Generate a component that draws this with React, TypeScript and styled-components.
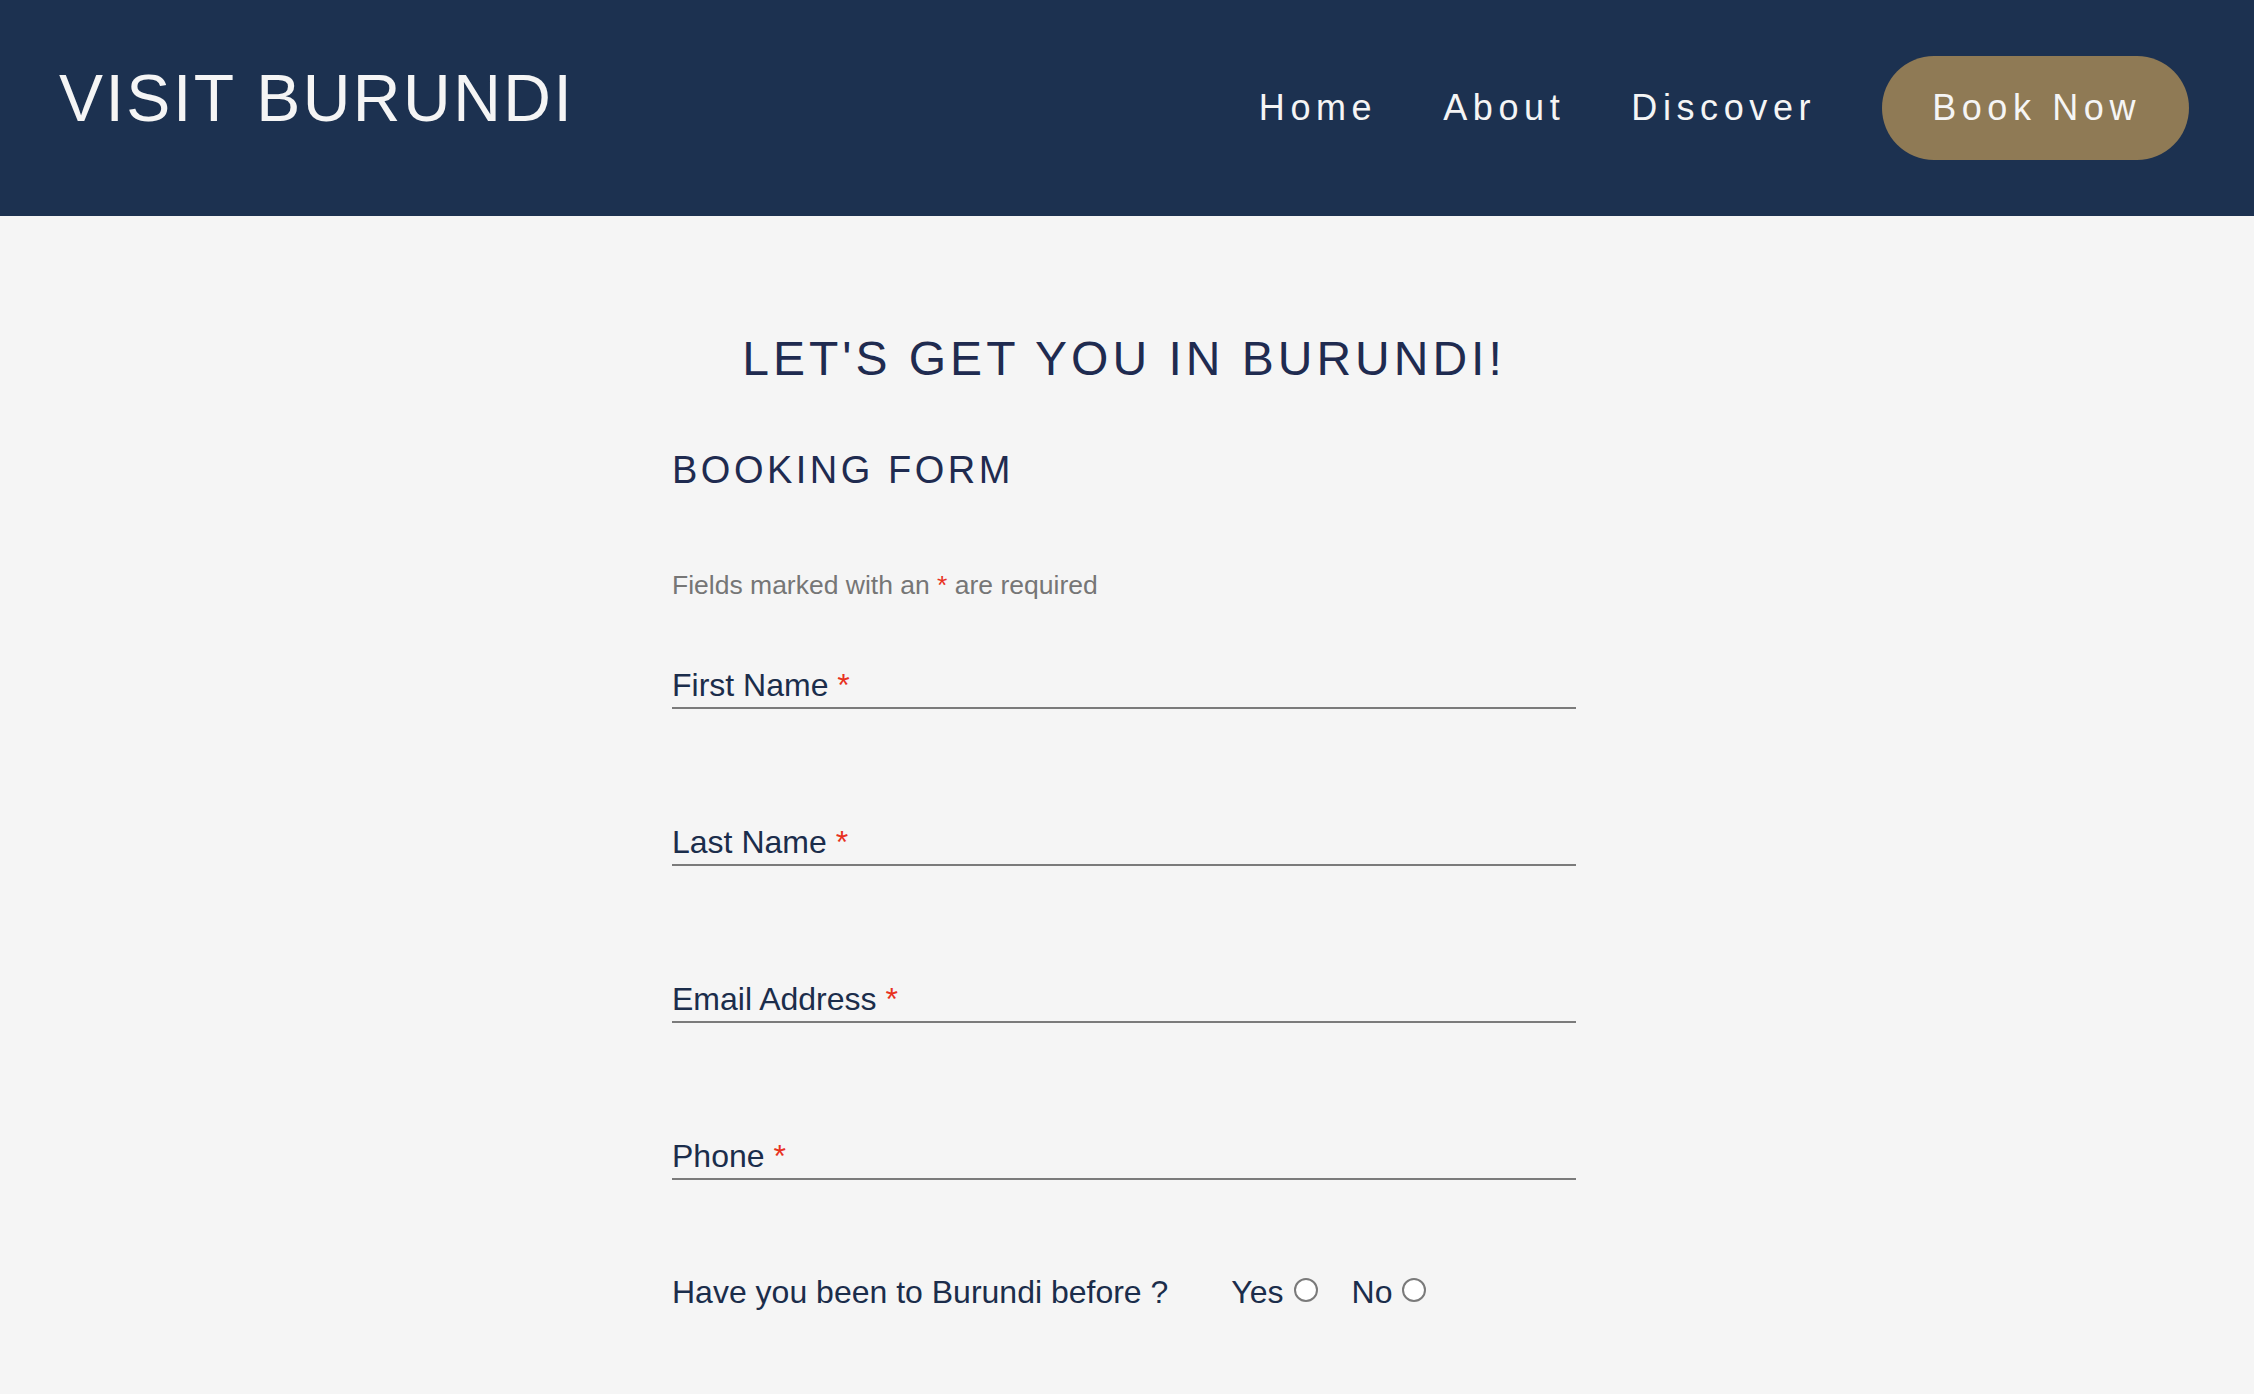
import React from "react";
import styled, { createGlobalStyle } from "styled-components";

const GlobalStyle = createGlobalStyle`
  html, body {
    margin: 0;
    padding: 0;
    background: #f5f5f5;
  }
  body {
    font-family: "Liberation Sans", Arial, sans-serif;
  }
  * { box-sizing: border-box; }
`;

const Page = styled.div`
  min-height: 1394px;
  background: #f5f5f5;
`;

const Header = styled.header`
  height: 216px;
  background: #1c3150;
  display: flex;
  align-items: center;
  justify-content: space-between;
  padding: 0 65px 0 59px;
`;

const Logo = styled.div`
  color: #f5f5f5;
  font-size: 66px;
  letter-spacing: 2.5px;
  line-height: 1;
  margin-bottom: 20px;
`;

const Nav = styled.nav`
  display: flex;
  align-items: center;
  gap: 66px;
`;

const NavLink = styled.a`
  color: #f5f5f5;
  font-size: 36px;
  letter-spacing: 5.6px;
  text-decoration: none;
  line-height: 1;
`;

const BookButton = styled.button`
  height: 104px;
  padding: 0 48px 0 50px;
  border: none;
  border-radius: 52px;
  background: #8f7a55;
  color: #f5f5f5;
  font-family: inherit;
  font-size: 36px;
  letter-spacing: 5.6px;
  cursor: pointer;
`;

const Main = styled.main`
  padding: 115px 6px 0 0;
  display: flex;
  flex-direction: column;
  align-items: center;
`;

const Title = styled.h1`
  margin: 0;
  font-size: 48px;
  line-height: 56px;
  font-weight: 400;
  letter-spacing: 4px;
  color: #1f2b50;
`;

const Form = styled.form`
  width: 904px;
  margin-top: 61px;
  display: flex;
  flex-direction: column;
`;

const FormTitle = styled.h2`
  margin: 0;
  font-size: 38px;
  line-height: 44px;
  font-weight: 400;
  letter-spacing: 3.5px;
  color: #1f2b50;
`;

const Note = styled.p`
  margin: 78px 0 67px;
  font-size: 26.5px;
  line-height: 30px;
  color: #767676;
`;

const Star = styled.span`
  color: #e8321f;
`;

const Field = styled.label`
  display: block;
  font-size: 32px;
  line-height: 37px;
  color: #1b2d4b;
  padding-bottom: 3px;
  border-bottom: 2px solid #7b7b7b;
  & + & {
    margin-top: 115px;
  }
`;

const RadioRow = styled.div`
  margin-top: 94px;
  display: flex;
  align-items: center;
  font-size: 32px;
  line-height: 37px;
  color: #1b2d4b;
`;

const Question = styled.span`
  margin-right: 63px;
`;

const Option = styled.label<{ $last?: boolean }>`
  display: flex;
  align-items: center;
  gap: 10px;
  margin-right: ${(p) => (p.$last ? "0" : "34px")};
`;

const RadioCircle = styled.span`
  width: 24px;
  height: 24px;
  border-radius: 50%;
  border: 2px solid #7a7a7a;
  background: #ffffff;
  margin-top: -6px;
`;

export default function App() {
  const fields = ["First Name", "Last Name", "Email Address", "Phone"];
  return (
    <Page>
      <GlobalStyle />
      <Header>
        <Logo>VISIT BURUNDI</Logo>
        <Nav>
          <NavLink href="#">Home</NavLink>
          <NavLink href="#">About</NavLink>
          <NavLink href="#">Discover</NavLink>
          <BookButton type="button">Book Now</BookButton>
        </Nav>
      </Header>
      <Main>
        <Title>LET'S GET YOU IN BURUNDI!</Title>
        <Form>
          <FormTitle>BOOKING FORM</FormTitle>
          <Note>
            Fields marked with an <Star>*</Star> are required
          </Note>
          {fields.map((f) => (
            <Field key={f}>
              {f} <Star>*</Star>
            </Field>
          ))}
          <RadioRow>
            <Question>Have you been to Burundi before ?</Question>
            <Option>
              Yes
              <RadioCircle />
            </Option>
            <Option $last>
              No
              <RadioCircle />
            </Option>
          </RadioRow>
        </Form>
      </Main>
    </Page>
  );
}
